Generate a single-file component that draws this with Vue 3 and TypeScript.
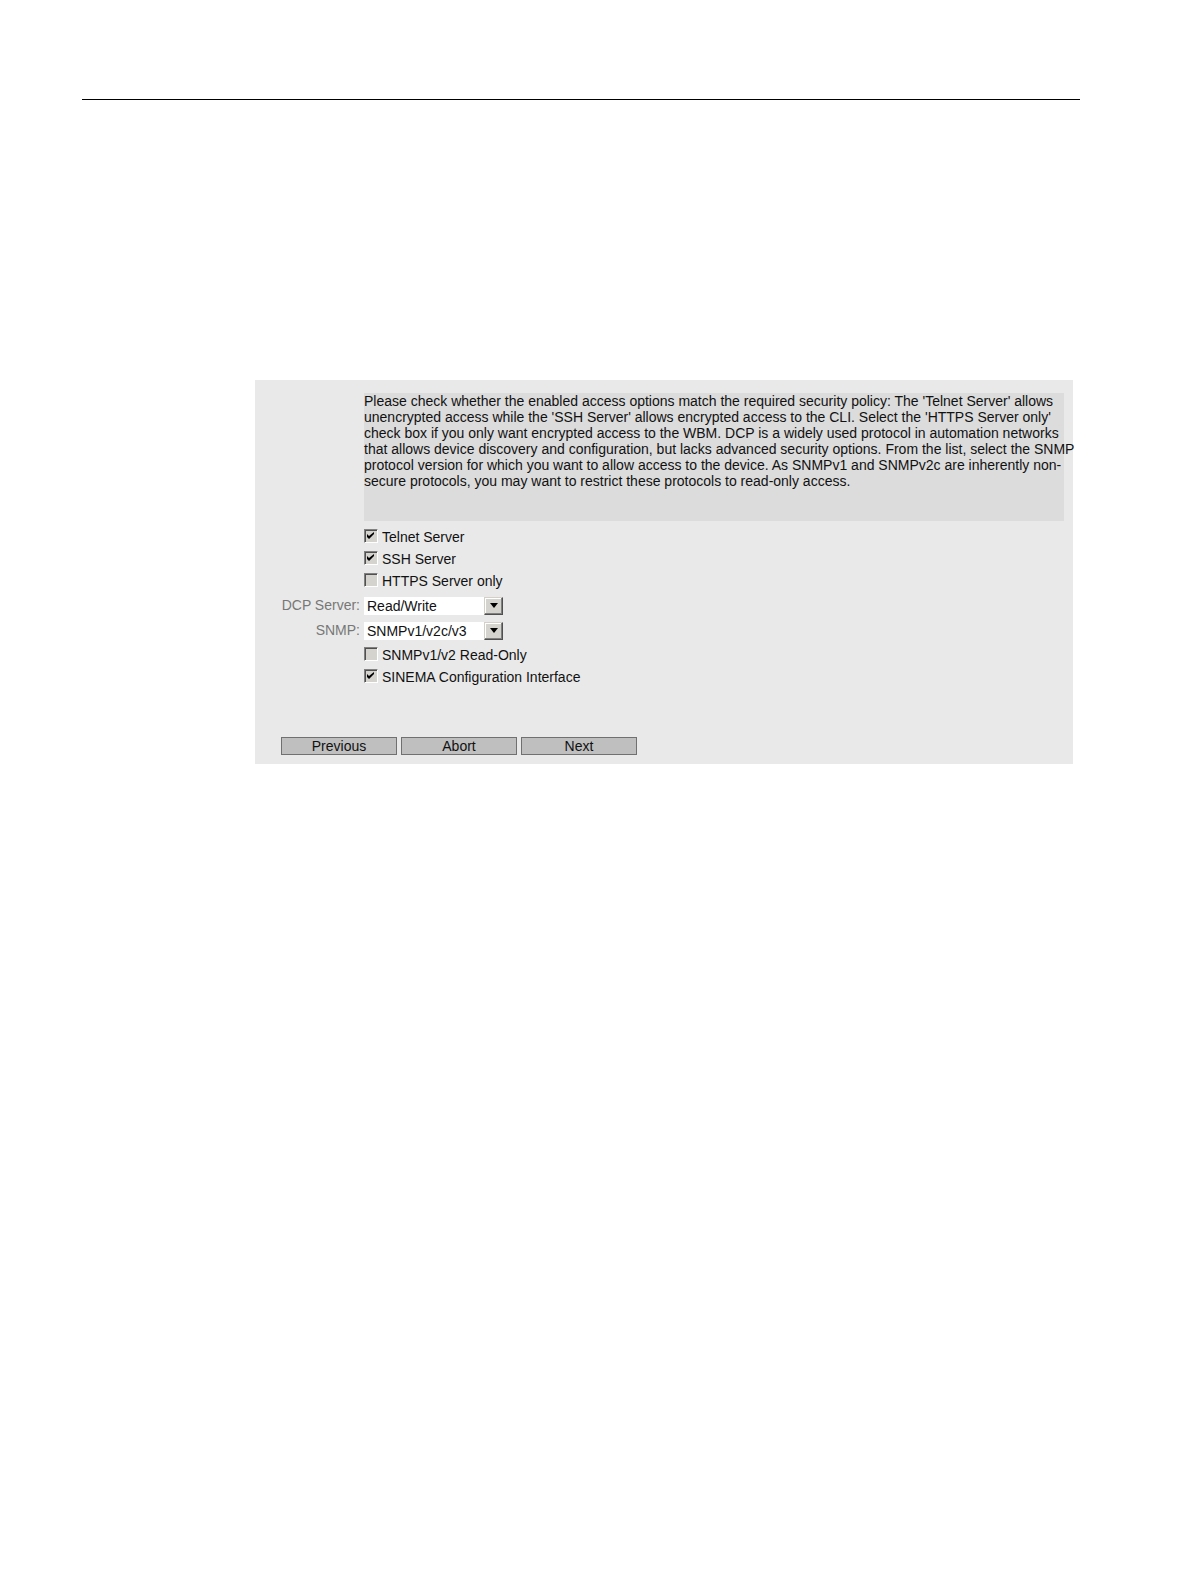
<script setup lang="ts">
import { ref } from 'vue'

interface CheckOption {
  id: string
  label: string
  checked: boolean
}

interface ListOption {
  id: string
  label: string
  value: string
  choices: string[]
}

const servers = ref<CheckOption[]>([
  { id: 'telnet', label: 'Telnet Server', checked: true },
  { id: 'ssh', label: 'SSH Server', checked: true },
  { id: 'https', label: 'HTTPS Server only', checked: false },
])

const lists = ref<ListOption[]>([
  { id: 'dcp', label: 'DCP Server:', value: 'Read/Write', choices: ['Read/Write', 'Read-Only', 'Disabled'] },
  { id: 'snmp', label: 'SNMP:', value: 'SNMPv1/v2c/v3', choices: ['SNMPv1/v2c/v3', 'SNMPv3', 'Disabled'] },
])

const extras = ref<CheckOption[]>([
  { id: 'snmp-ro', label: 'SNMPv1/v2 Read-Only', checked: false },
  { id: 'sinema', label: 'SINEMA Configuration Interface', checked: true },
])

const actions: string[] = ['Previous', 'Abort', 'Next']
</script>

<template>
  <main class="page">
    <hr class="rule" />
    <form class="panel" @submit.prevent>
      <p class="info">
        Please check whether the enabled access options match the required security policy: The 'Telnet Server' allows<br />
        unencrypted access while the 'SSH Server' allows encrypted access to the CLI. Select the 'HTTPS Server only'<br />
        check box if you only want encrypted access to the WBM. DCP is a widely used protocol in automation networks<br />
        that allows device discovery and configuration, but lacks advanced security options. From the list, select the SNMP<br />
        protocol version for which you want to allow access to the device. As SNMPv1 and SNMPv2c are inherently non-<br />
        secure protocols, you may want to restrict these protocols to read-only access.
      </p>

      <div class="checks">
        <div v-for="item in servers" :key="item.id" class="check-row">
          <span class="box">
            <input :id="item.id" v-model="item.checked" type="checkbox" />
            <svg v-if="item.checked" class="tick" viewBox="0 0 14 14" aria-hidden="true">
              <path d="M3 5v3l2 2 5-5V3L5 7z" />
            </svg>
          </span>
          <label :for="item.id">{{ item.label }}</label>
        </div>
      </div>

      <div class="lists">
        <div v-for="item in lists" :key="item.id" class="list-row">
          <label class="caption" :for="item.id">{{ item.label }}</label>
          <span class="drop">
            <select :id="item.id" v-model="item.value">
              <option v-for="choice in item.choices" :key="choice">{{ choice }}</option>
            </select>
            <span class="arrow" aria-hidden="true">
              <svg viewBox="0 0 8 5"><path d="M0 0h8L4 5z" /></svg>
            </span>
          </span>
        </div>
      </div>

      <div class="checks">
        <div v-for="item in extras" :key="item.id" class="check-row">
          <span class="box">
            <input :id="item.id" v-model="item.checked" type="checkbox" />
            <svg v-if="item.checked" class="tick" viewBox="0 0 14 14" aria-hidden="true">
              <path d="M3 5v3l2 2 5-5V3L5 7z" />
            </svg>
          </span>
          <label :for="item.id">{{ item.label }}</label>
        </div>
      </div>

      <div class="actions">
        <button v-for="action in actions" :key="action" type="button">{{ action }}</button>
      </div>
    </form>
  </main>
</template>

<style>
body {
  background: #fff;
}
</style>

<style scoped>
.page {
  box-sizing: border-box;
  padding: 99px 111px 0 82px;
  font: 14px/16px "Liberation Sans", Arial, sans-serif;
  color: #111;
}

.rule {
  height: 1px;
  margin: 0;
  border: 0;
  background: #000;
}

.panel {
  margin: 280px 7px 0 173px;
  padding: 13px 9px 9px 26px;
  background: #e9e9e9;
}

.info {
  box-sizing: border-box;
  min-height: 128px;
  margin: 0 0 4px 83px;
  background: #dcdcdc;
  white-space: nowrap;
}

.checks {
  margin-left: 83px;
}

.check-row {
  display: flex;
  align-items: center;
  gap: 4px;
  height: 22px;
}

.check-row label {
  padding-top: 2px;
}

.box {
  position: relative;
  width: 14px;
  height: 14px;
}

.box input {
  appearance: none;
  box-sizing: border-box;
  display: block;
  width: 14px;
  height: 14px;
  margin: 0;
  border: 1px solid;
  border-color: #808080 #fff #fff #808080;
  background: #d4d3ce;
  box-shadow: inset 1px 1px 0 #505050;
}

.tick {
  position: absolute;
  inset: 0;
  pointer-events: none;
}

.lists {
  padding-top: 2px;
}

.list-row {
  display: flex;
  align-items: center;
  gap: 4px;
  height: 25px;
}

.caption {
  width: 79px;
  padding-bottom: 2px;
  color: #777;
  text-align: right;
  white-space: nowrap;
}

.drop {
  position: relative;
  width: 139px;
  height: 18px;
}

.drop select {
  appearance: none;
  box-sizing: border-box;
  display: block;
  width: 100%;
  height: 18px;
  padding: 1px 20px 0 3px;
  border: 0;
  border-radius: 0;
  background: #fff;
  color: #111;
  font: inherit;
}

.arrow {
  position: absolute;
  top: 0;
  right: 0;
  box-sizing: border-box;
  display: flex;
  align-items: center;
  justify-content: center;
  width: 19px;
  height: 18px;
  border: 1px solid;
  border-color: #d4d0c8 #505050 #505050 #d4d0c8;
  background: #d4d3ce;
  box-shadow: inset -1px -1px 0 #808080, inset 1px 1px 0 #fff;
  pointer-events: none;
}

.arrow svg {
  width: 8px;
  height: 5px;
}

.actions {
  display: flex;
  gap: 4px;
  margin-top: 50px;
}

.actions button {
  box-sizing: border-box;
  width: 116px;
  height: 18px;
  padding: 0;
  border: 1px solid #707070;
  border-radius: 0;
  background: #bfbfbf;
  color: #111;
  font: inherit;
}
</style>
